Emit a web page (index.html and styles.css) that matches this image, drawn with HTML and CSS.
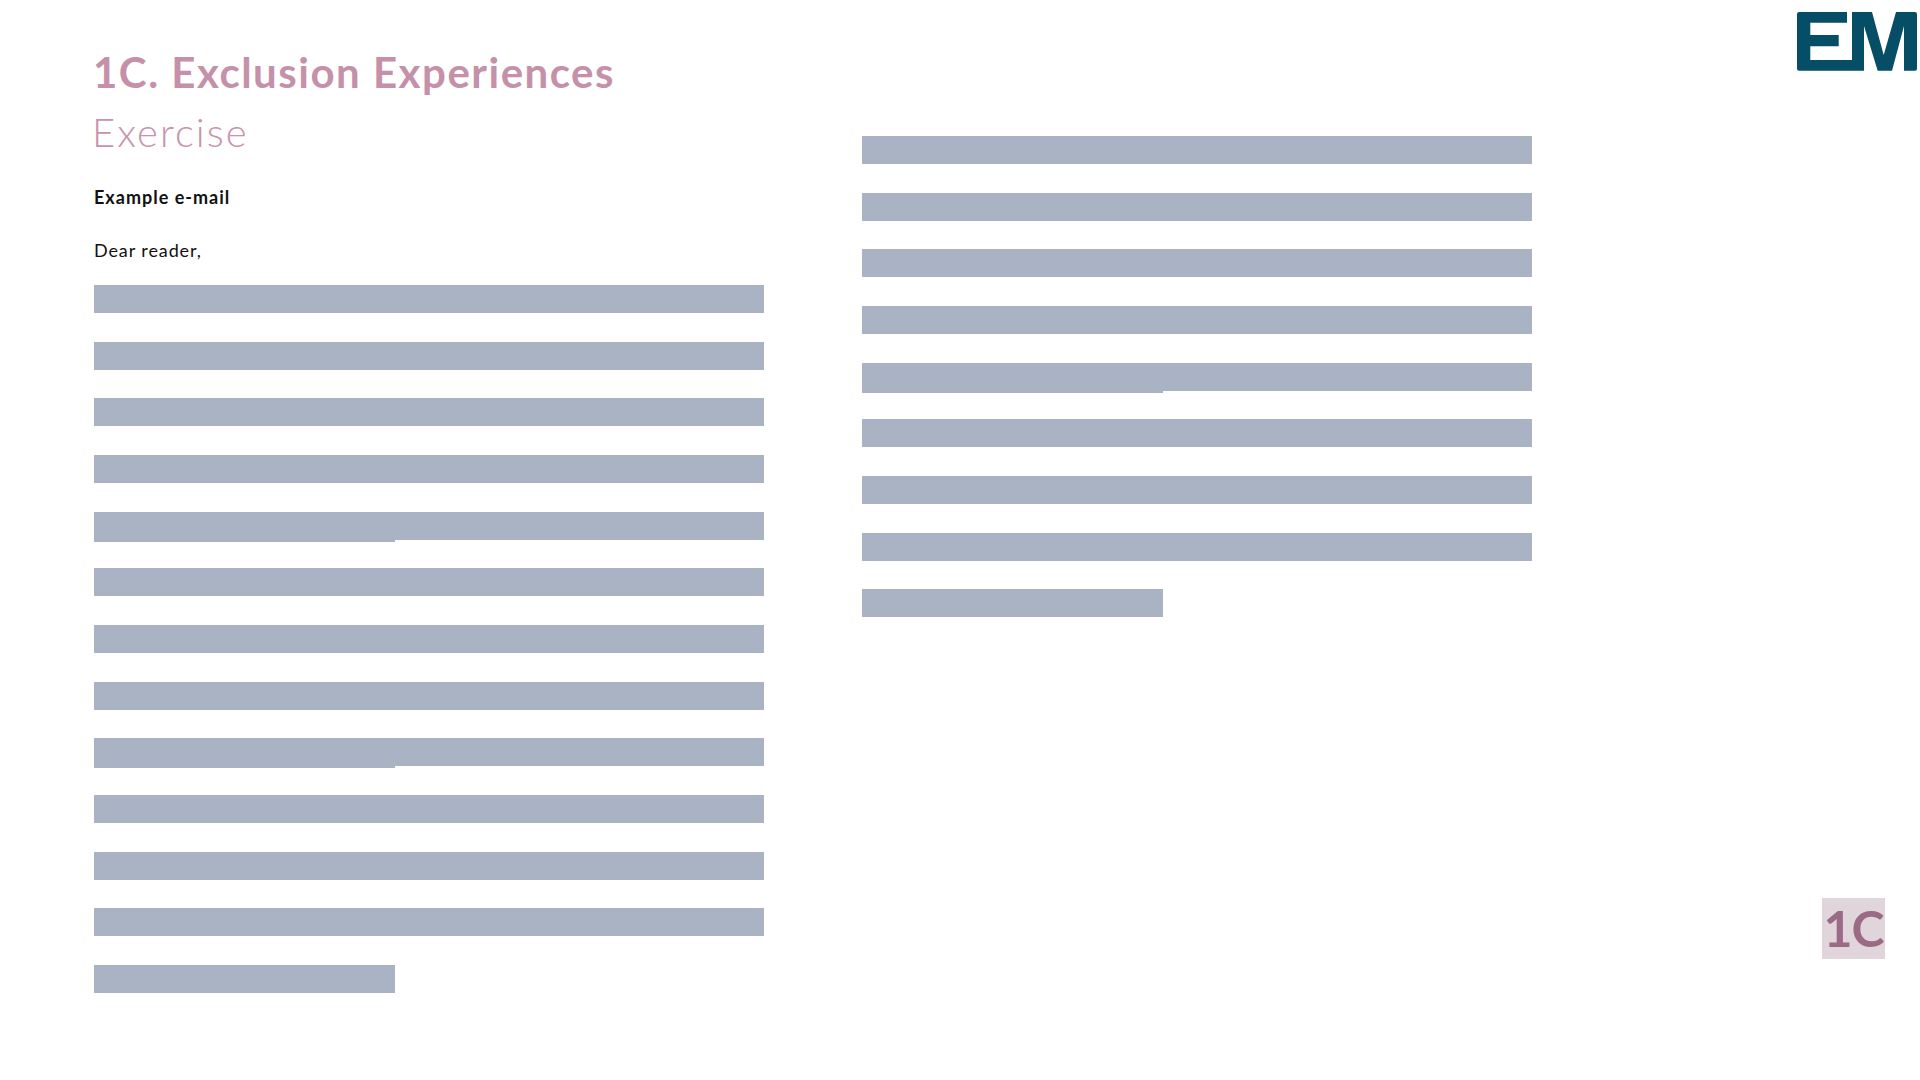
FILE: index.html
```html
<!DOCTYPE html>
<html lang="en">
<head>
<meta charset="utf-8">
<title>1C. Exclusion Experiences</title>
<link rel="stylesheet" href="styles.css">
</head>
<body>
<div class="slide">
  <section class="col col-left">
    <h1 class="title">1C. Exclusion Experiences</h1>
    <h2 class="subtitle">Exercise</h2>
    <p class="label">Example e-mail</p>
    <p class="greeting">Dear reader,</p>
    <div class="lines">
      <div class="bar"></div>
      <div class="bar"></div>
      <div class="bar"></div>
      <div class="bar"></div>
      <div class="bar split"><span class="seg-a"></span><span class="seg-b"></span></div>
      <div class="bar"></div>
      <div class="bar"></div>
      <div class="bar"></div>
      <div class="bar split"><span class="seg-a"></span><span class="seg-b"></span></div>
      <div class="bar"></div>
      <div class="bar"></div>
      <div class="bar"></div>
      <div class="bar short"></div>
    </div>
  </section>
  <section class="col col-right">
    <div class="lines">
      <div class="bar"></div>
      <div class="bar"></div>
      <div class="bar"></div>
      <div class="bar"></div>
      <div class="bar split"><span class="seg-a"></span><span class="seg-b"></span></div>
      <div class="bar"></div>
      <div class="bar"></div>
      <div class="bar"></div>
      <div class="bar short"></div>
    </div>
  </section>
  <aside class="rail">
    <svg class="logo" width="120" height="59" viewBox="0 0 120 59" aria-label="EM">
      <path fill="#064d66" d="M2 0 H50 V10.7 H13.3 V23 H41.7 V34.3 H13.3 V48 H55 V0 H75 L86.7 43 L99 0 H118 Q120 0 120 2 V56.7 Q120 58.7 118 58.7 H107 V14 L95 58.7 H80.7 L67 14 V58.7 H2 Q0 58.7 0 56.7 V2 Q0 0 2 0 Z"/>
    </svg>
    <div class="badge">1C</div>
  </aside>
</div>
</body>
</html>
```

FILE: styles.css
```css
html, body {
  margin: 0;
  padding: 0;
  background: #ffffff;
}

.slide {
  width: 1920px;
  height: 1080px;
  display: flex;
  box-sizing: border-box;
  padding-left: 94px;
  font-family: "Lato", "Open Sans", sans-serif;
  overflow: hidden;
}

.col {
  width: 670px;
  flex: none;
}

.col-right {
  margin-left: 98px;
  padding-top: 136px;
}

.title {
  margin: 51px 0 0 -1px;
  font-size: 42px;
  line-height: 42px;
  font-weight: 700;
  color: #c590a9;
  letter-spacing: 1.5px;
  white-space: nowrap;
}

.subtitle {
  margin: 18.5px 0 0 -2px;
  font-size: 40px;
  line-height: 40px;
  font-weight: 300;
  color: #c993ac;
  letter-spacing: 2px;
}

.label {
  margin: 36.5px 0 0 0;
  font-size: 18px;
  line-height: 18px;
  font-weight: 700;
  color: #111111;
  letter-spacing: 1px;
}

.greeting {
  margin: 35px 0 0 0;
  font-size: 18px;
  line-height: 18px;
  font-weight: 400;
  color: #111111;
  letter-spacing: 0.9px;
}

.col-left .lines {
  margin-top: 26px;
}

.lines {
  display: flex;
  flex-direction: column;
  gap: 28.67px;
}

.bar {
  height: 28px;
  width: 670px;
  background: #aab3c4;
}

.bar.short {
  width: 301px;
}

.bar.split {
  display: flex;
  align-items: flex-start;
  background: transparent;
}

.seg-a {
  display: block;
  width: 301px;
  height: 30px;
  background: #aab3c4;
}

.seg-b {
  display: block;
  flex: 1;
  height: 28px;
  background: #aab3c4;
}

.rail {
  flex: 1;
  display: flex;
  flex-direction: column;
  align-items: flex-end;
  justify-content: space-between;
  padding: 12px 3px 121px 0;
}

.logo {
  display: block;
}

.badge {
  width: 63px;
  height: 61px;
  margin-right: 32px;
  background: #e1d5dc;
  color: #9b6b86;
  font-family: "Lato", sans-serif;
  font-weight: 700;
  font-size: 50px;
  line-height: 61px;
  text-align: center;
  letter-spacing: -1px;
}
```
